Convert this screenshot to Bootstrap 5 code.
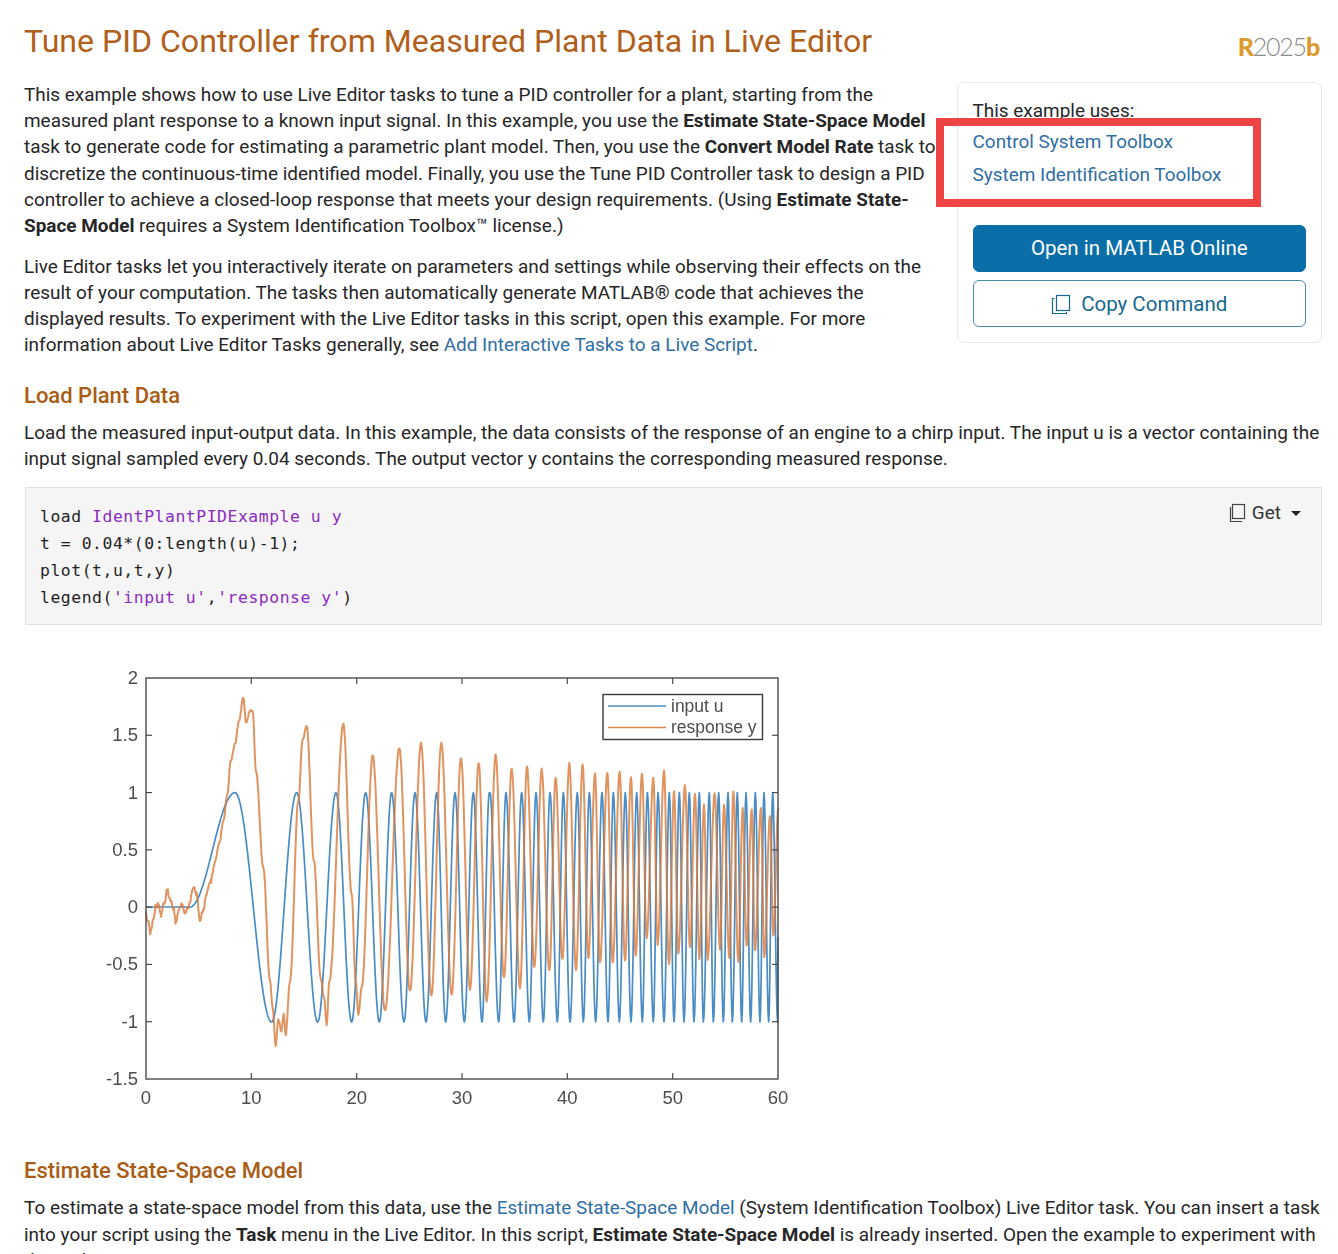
<!DOCTYPE html>
<html lang="en">
<head>
<meta charset="utf-8">
<title>Tune PID Controller from Measured Plant Data in Live Editor</title>
<link href="https://cdn.jsdelivr.net/npm/bootstrap@5.3.0/dist/css/bootstrap.min.css" rel="stylesheet">
<style>
html,body{height:1254px;overflow:hidden}
body{font-family:Roboto,"Liberation Sans",sans-serif;font-size:18.96px;line-height:26.2px;color:#262626;background:#fff}
.pg{padding:0 16px 0 24px;position:relative}
.ttl{font-size:32.1px;font-weight:400;line-height:38px;color:#b0601a;margin:0}
.hdr{padding-top:22px;height:82px}
.rel{font-family:Lato,sans-serif;font-size:25px;line-height:30px;color:#8a8a8a;letter-spacing:-1.2px;font-weight:300;margin:9px 3px 0 0}
.rel b{color:#dd9a2c;font-weight:900}
.uses{float:right;width:365px;height:261px;margin:0 0 10px 15px;border:1px solid #e4e6e8;border-radius:7px;padding:15px 15px 15px 14.5px;line-height:26px}
.lnks a{display:block;line-height:33px}
.lnks{margin:1px 0 34px}
a{color:#2f6ea5;text-decoration:none}
.bopen,.bcopy{height:47px;font-size:20.5px;font-weight:400;border-radius:6px;padding:0;display:flex;align-items:center;justify-content:center;gap:10px}
.bopen{background:#0a6fa9;border:1px solid #0a6fa9;color:#fff}
.bcopy{background:#fff;border:1px solid #4c8ba8;color:#17688f;padding-top:1px}
.txt{margin:0 0 14.5px}
.sec{font-size:22px;line-height:28px;font-weight:500;color:#a95c14;margin:0 0 10px}
.gap-a{margin-top:23.5px}
.gap-b{margin-top:45px}
.txt-b{margin-bottom:15px}
.cbox{position:relative;clear:both;height:138px;margin:0 0 0 1px;background:#f5f5f5;border:1px solid #e0e0e0;padding:15px 14px}
.cbox pre{margin:0;font-family:"DejaVu Sans Mono",monospace;font-size:16.4px;letter-spacing:.55px;line-height:27px;color:#1f1f1f;overflow:visible}
.str{color:#8a2bc2}
.gbtn{position:absolute;right:20px;top:12px;display:flex;align-items:center;gap:6px;font-size:18.96px;line-height:26px;color:#333}
.gbtn.dropdown-toggle::after{margin-left:4px;border-top-color:#222}
.plot{display:block;margin:27px 0 0 76px;filter:blur(.3px)}
.redbox{position:absolute;left:936px;top:118px;width:325px;height:89px;border:8px solid #ef4444;pointer-events:none}
</style>
</head>
<body>
<div class="pg">
  <div class="hdr d-flex justify-content-between align-items-start">
    <h1 class="ttl">Tune PID Controller from Measured Plant Data in Live Editor</h1>
    <div class="rel"><b>R</b>2025<b>b</b></div>
  </div>
  <div class="uses">
    <div>This example uses:</div>
    <div class="lnks"><a href="#">Control System Toolbox</a><a href="#">System Identification Toolbox</a></div>
    <div class="d-grid gap-2">
      <a class="btn bopen" href="#">Open in MATLAB Online</a>
      <a class="btn bcopy" href="#"><svg width="20" height="21" viewBox="0 0 20 21" fill="none" stroke="currentColor" stroke-width="1.2"><rect x="5.5" y="1.5" width="13" height="15"/><path d="M3.5 4.5H1.5V19.5H15.5V18"/></svg>Copy Command</a>
    </div>
  </div>
  <p class="txt">This example shows how to use Live Editor tasks to tune a PID controller for a plant, starting from the measured plant response to a known input signal. In this example, you use the <b>Estimate State-Space Model</b> task to generate code for estimating a parametric plant model. Then, you use the <b>Convert Model Rate</b> task to discretize the continuous-time identified model. Finally, you use the Tune PID Controller task to design a PID controller to achieve a closed-loop response that meets your design requirements. (Using <b>Estimate State-Space Model</b> requires a System Identification Toolbox™ license.)</p>
  <p class="txt">Live Editor tasks let you interactively iterate on parameters and settings while observing their effects on the result of your computation. The tasks then automatically generate MATLAB® code that achieves the displayed results. To experiment with the Live Editor tasks in this script, open this example. For more information about Live Editor Tasks generally, see <a href="#">Add Interactive Tasks to a Live Script</a>.</p>
  <h2 class="sec gap-a">Load Plant Data</h2>
  <p class="txt txt-b">Load the measured input-output data. In this example, the data consists of the response of an engine to a chirp input. The input u is a vector containing the input signal sampled every 0.04 seconds. The output vector y contains the corresponding measured response.</p>
  <div class="cbox">
    <pre>load <span class="str">IdentPlantPIDExample u y</span>
t = 0.04*(0:length(u)-1);
plot(t,u,t,y)
legend(<span class="str">'input u'</span>,<span class="str">'response y'</span>)</pre>
    <div class="gbtn dropdown-toggle"><svg width="18" height="20" viewBox="0 0 18 20" fill="none" stroke="#444" stroke-width="1.2"><rect x="4.5" y="1.5" width="12" height="14"/><path d="M2.5 4V18.5H14"/></svg>Get</div>
  </div>
  <svg class="plot" id="plot" width="720" height="460" viewBox="100 651 720 460" font-family="Liberation Sans, Arial, sans-serif" font-size="18.5" fill="#4d4d4d"></svg>
  <h2 class="sec gap-b">Estimate State-Space Model</h2>
  <p class="txt">To estimate a state-space model from this data, use the <a href="#">Estimate State-Space Model</a> (System Identification Toolbox) Live Editor task. You can insert a task into your script using the <b>Task</b> menu in the Live Editor. In this script, <b>Estimate State-Space Model</b> is already inserted. Open the example to experiment with the task.</p>
  <div class="redbox"></div>
</div>
<script>
(function(){
var ns='http://www.w3.org/2000/svg',s=document.getElementById('plot');
function el(n,a,t){var e=document.createElementNS(ns,n);for(var k in a)e.setAttribute(k,a[k]);if(t!==undefined)e.textContent=t;s.appendChild(e);return e}
var L=146,R=778,T=677,B=1078;
var seed=7;function rnd(){seed=(seed*16807)%2147483647;return seed/2147483647-.5}
function z2(p){return[90+p[0]/3,660+p[1]/3]}function z3(p){return[480+p[0]/3,660+p[1]/3]}
function xy(a,y,f){return a.map(function(x){return f([x,y])})}
var u=[[146,906],[190,906],z2([435,395])]
 .concat(xy([620,738,827,905,975,1040,1095,1150,1198],395,z2),
 xy([30,78,125,168,210,250,292,328,366,400,436,470,502,534,568,598,628,658,688,716,744,772,798,826,852,878],395,z3),
 xy([545,683,785,868,942,1008,1067,1123,1176],1083,z2),
 xy([56,102,148,190,232,270,310,347,384,418,453,487,520,552,582,612,642,670,700,730,757,785,812,840,866,893],1083,z3),
 [[778,936]]);
var o=[[168,760],[175,780],[181,815],[190,770],[198,735],[205,730],[213,765],[222,730],[232,690],[240,710],[250,740],[258,785],[268,740],[276,725],[284,760],[296,735],[310,680],[320,700],[330,780],[340,745],[352,690],[362,660],[375,600],[388,545],[400,480],[412,400],[422,300],[435,250],[447,180],[460,110],[468,185],[480,150],[488,150],[498,330],[520,620],[540,960],[548,1040],[557,1155],[565,1075],[574,1110],[581,1060],[587,1120],[600,960],[625,420],[638,235],[650,195],[672,600],[692,950],[702,1010],[710,1090],[718,960],[760,190],[785,700],[797,960],[805,1060],[815,980],[848,285],[885,1050],[928,262],[960,990],[993,248],[1024,1005],[1054,245],[1085,1000],[1113,290],[1140,985],[1166,305],[1190,1020]].map(z2)
 .concat([[20,1020],[47,283],[72,950],[95,322],[120,980],[141,317],[163,920],[185,325],[208,930],[227,350],[247,895],[268,308],[288,925],[308,310],[325,890],[345,338],[360,905],[382,335],[398,905],[419,330],[435,900],[453,347],[467,885],[486,337],[500,830],[520,352],[533,850],[552,330],[567,910],[582,392],[595,875],[615,375],[630,860],[645,398],[658,895],[672,430],[683,895],[704,398],[720,865],[732,432],[748,890],[760,392],[775,905],[788,442],[800,855],[815,445],[825,870],[843,440],[853,890],[870,465],[880,825],[895,440]].map(z3));
function series(pts,noise,step){pts=pts.slice().sort(function(a,b){return a[0]-b[0]});var out=[];for(var i=0;i<pts.length-1;i++){var a=pts[i],b=pts[i+1],n=Math.max(3,Math.round((b[0]-a[0])/step));for(var j=0;j<n;j++){var f=j/n,c=(1-Math.cos(Math.PI*f))/2,x=a[0]+(b[0]-a[0])*f,nz=noise*(x<215?3:1);out.push(x.toFixed(2)+','+(a[1]+(b[1]-a[1])*c+nz*rnd()).toFixed(2))}}var l=pts[pts.length-1];out.push(l[0]+','+l[1]);return out.join(' ')}
el('polyline',{points:series(u,0,.6),fill:'none',stroke:'#4a8cc5','stroke-width':1.7,'stroke-linejoin':'round'});
el('polyline',{points:series(o,1.8,.55),fill:'none',stroke:'#d8793a','stroke-width':2,'stroke-linejoin':'round','stroke-opacity':.8});
el('rect',{x:L,y:T,width:R-L,height:B-T,fill:'none',stroke:'#4a4a4a','stroke-width':1.4});
[0,10,20,30,40,50,60].forEach(function(v,k){var x=L+(R-L)*v/60;if(k>0&&k<6){el('line',{x1:x,x2:x,y1:T,y2:T+6,stroke:'#4a4a4a','stroke-width':1.2});el('line',{x1:x,x2:x,y1:B,y2:B-6,stroke:'#4a4a4a','stroke-width':1.2})}el('text',{x:x,y:1103,'text-anchor':'middle'},String(v))});
['2','1.5','1','0.5','0','-0.5','-1','-1.5'].forEach(function(v,k){var y=T+(B-T)*k/7;if(k>0&&k<7){el('line',{x1:L,x2:L+6,y1:y,y2:y,stroke:'#4a4a4a','stroke-width':1.2});el('line',{x1:R,x2:R-6,y1:y,y2:y,stroke:'#4a4a4a','stroke-width':1.2})}el('text',{x:138,y:y+6,'text-anchor':'end'},v)});
el('rect',{x:603,y:693.5,width:159.5,height:45,fill:'#fff',stroke:'#3a3a3a','stroke-width':1.4});
el('line',{x1:608,x2:666,y1:705,y2:705,stroke:'#4a8cc5','stroke-width':1.5});
el('line',{x1:608,x2:666,y1:726.5,y2:726.5,stroke:'#d9894f','stroke-width':1.5});
el('text',{x:671,y:711,'font-size':17.5},'input u');
el('text',{x:671,y:732,'font-size':17.5},'response y');
})();
</script>
<script src="https://cdn.jsdelivr.net/npm/bootstrap@5.3.0/dist/js/bootstrap.bundle.min.js"></script>
</body>
</html>
